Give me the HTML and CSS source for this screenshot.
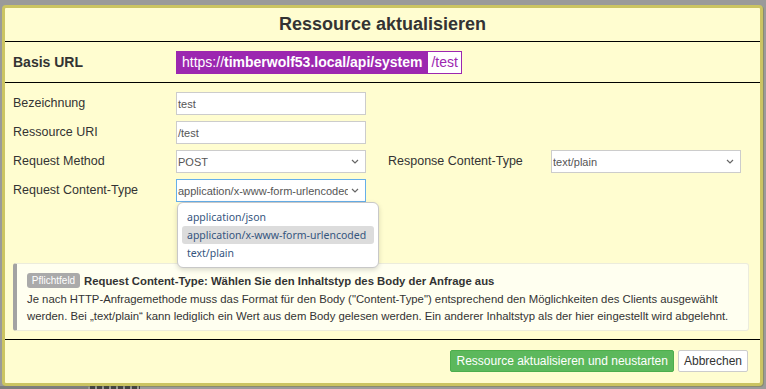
FILE: index.html
```html
<!DOCTYPE html>
<html lang="de">
<head>
<meta charset="utf-8">
<title>Ressource aktualisieren</title>
<link rel="stylesheet" href="styles.css">
</head>
<body>
<div class="modal">
  <div class="modal-header">Ressource aktualisieren</div>
  <div class="base-row">
    <div class="base-label">Basis URL</div>
    <div class="url">
      <span class="url-base">https://<b>timberwolf53.local/api/system</b></span><span class="url-path">/test</span>
    </div>
  </div>
  <div class="modal-body">
    <div class="form-grid">
      <div class="label">Bezeichnung</div>
      <div class="field input">test</div>
      <div class="spacer"></div>

      <div class="label">Ressource URI</div>
      <div class="field input">/test</div>
      <div class="spacer"></div>

      <div class="label">Request Method</div>
      <div class="field select"><span class="val">POST</span><svg class="chev" width="8" height="5" viewBox="0 0 8 5"><path d="M1 1l3 3 3-3" fill="none" stroke="#666" stroke-width="1.2"/></svg></div>
      <div class="label label-right">Response Content-Type</div>
      <div class="field select"><span class="val">text/plain</span><svg class="chev" width="8" height="5" viewBox="0 0 8 5"><path d="M1 1l3 3 3-3" fill="none" stroke="#666" stroke-width="1.2"/></svg></div>

      <div class="label">Request Content-Type</div>
      <div class="field-wrap">
        <div class="field select focused"><span class="val">application/x-www-form-urlencoded</span><svg class="chev" width="8" height="5" viewBox="0 0 8 5"><path d="M1 1l3 3 3-3" fill="none" stroke="#666" stroke-width="1.2"/></svg></div>
        <ul class="dropdown">
          <li>application/json</li>
          <li class="active">application/x-www-form-urlencoded</li>
          <li>text/plain</li>
        </ul>
      </div>
      <div class="spacer"></div>
    </div>
    <div class="info">
      <div class="info-title"><span class="badge">Pflichtfeld</span>Request Content-Type: Wählen Sie den Inhaltstyp des Body der Anfrage aus</div>
      <p class="info-text">Je nach HTTP-Anfragemethode muss das Format für den Body ("Content-Type") entsprechend den Möglichkeiten des Clients ausgewählt werden. Bei „text/plain“ kann lediglich ein Wert aus dem Body gelesen werden. Ein anderer Inhaltstyp als der hier eingestellt wird abgelehnt.</p>
    </div>
  </div>
  <div class="modal-footer">
    <button class="btn btn-success">Ressource aktualisieren und neustarten</button>
    <button class="btn btn-default">Abbrechen</button>
  </div>
</div>
<div class="under">
  <div class="under-bar"></div>
  <div class="under-dots"></div>
</div>
</body>
</html>
```
FILE: styles.css
```css
* { box-sizing: border-box; }
html, body { margin: 0; padding: 0; }
body {
  width: 766px;
  height: 389px;
  overflow: hidden;
  background: #9a9a9a;
  font-family: "Liberation Sans", Arial, sans-serif;
  color: #333;
}
.modal {
  margin: 5px 3px 0 2px;
  height: 381px;
  border: 3px solid #cbc462;
  border-radius: 4px;
  background: #fffdd0;
  box-shadow: 1px 1px 0 #8a8a70;
  display: flex;
  flex-direction: column;
}
.modal-header {
  height: 34px;
  border-bottom: 1px solid #000;
  display: flex;
  align-items: center;
  justify-content: center;
  font-size: 18px;
  font-weight: bold;
  color: #333;
  padding-bottom: 1px;
}
.base-row {
  height: 41px;
  border-bottom: 1px solid #000;
  display: flex;
  align-items: center;
  padding-left: 8px;
}
.base-label {
  width: 163px;
  font-size: 14px;
  font-weight: bold;
  color: #333;
}
.url {
  display: flex;
  height: 23px;
  font-size: 14px;
}
.url-base {
  background: #9c27b0;
  color: #fff;
  padding: 0 5px 0 6px;
  display: flex;
  align-items: center;
}
.url-base b { font-weight: bold; }
.url-path {
  background: #fff;
  color: #9c27b0;
  border: 1px solid #9c27b0;
  padding: 0 3px;
  display: flex;
  align-items: center;
}
.modal-body {
  border-bottom: 1px solid #000;
  padding: 9px 11px 8px 8px;
}
.form-grid {
  display: grid;
  grid-template-columns: 163px 190px 185px 190px;
  grid-auto-rows: 23px;
  row-gap: 6px;
  align-items: center;
}
.label {
  font-size: 12.5px;
  color: #333;
  padding-bottom: 1px;
}
.label-right { padding-left: 22px; }
.spacer { grid-column: span 2; }
.field {
  height: 23px;
  background: #fff;
  border: 1px solid #ccc;
  font-size: 11px;
  color: #555;
  display: flex;
  align-items: center;
  padding: 0 1px;
  white-space: nowrap;
  overflow: hidden;
}
.select { justify-content: space-between; padding-right: 6px; }
.select .val { overflow: hidden; flex: 1; min-width: 0; }
.chev { flex: none; margin-left: 3px; }
.focused { border-color: #66afe9; }
.field-wrap { position: relative; height: 23px; }
.dropdown {
  position: absolute;
  top: 23px;
  left: 1px;
  width: 202px;
  margin: 0;
  padding: 5px 4px;
  list-style: none;
  background: #fff;
  border: 1px solid #c8c8c8;
  border-radius: 6px;
  box-shadow: 0 2px 5px rgba(0,0,0,0.15);
  font-family: "Noto Sans", "Open Sans", sans-serif;
  font-size: 10.5px;
  color: #35557e;
  z-index: 5;
}
.dropdown li {
  height: 18px;
  line-height: 18px;
  padding: 0 5px;
  border-radius: 3px;
  white-space: nowrap;
}
.dropdown li.active { background: #dcdcdc; }
.info {
  margin-top: 61px;
  height: 68px;
  background: #fffff0;
  border: 1px solid #ececdc;
  border-left: 4px solid #a3a3a3;
  border-radius: 3px;
  padding: 9px 8px 4px 10px;
}
.info-title {
  display: flex;
  align-items: center;
  height: 15px;
  font-size: 11.33px;
  font-weight: bold;
  color: #333;
}
.badge {
  display: inline-flex;
  align-items: center;
  justify-content: center;
  width: 53px;
  height: 15px;
  background: #aaa;
  color: #fff;
  font-weight: normal;
  font-size: 10px;
  border-radius: 3px;
  margin-right: 4px;
}
.info-text {
  margin: 3px 0 0;
  font-size: 11.33px;
  line-height: 17px;
  color: #333;
}
.modal-footer {
  flex: 1;
  display: flex;
  justify-content: flex-end;
  align-items: flex-start;
  gap: 4px;
  padding: 10px 12px 0 0;
}
.btn {
  height: 22px;
  font-family: "Liberation Sans", Arial, sans-serif;
  font-size: 12px;
  border-radius: 2px;
  padding: 0 5px;
  margin: 0;
}
.btn-success {
  background: #5cb85c;
  border: 1px solid #4cae4c;
  color: #fff;
}
.btn-default {
  background: #fff;
  border: 1px solid #ccc;
  color: #333;
  padding: 0 5px;
}
.under {
  display: flex;
  height: 3px;
}
.under-bar { width: 88px; background: #7d7d7d; }
.under-dots {
  width: 50px;
  margin-left: 2px;
  background: repeating-linear-gradient(90deg, #444 0 5px, transparent 5px 7px);
}
```
